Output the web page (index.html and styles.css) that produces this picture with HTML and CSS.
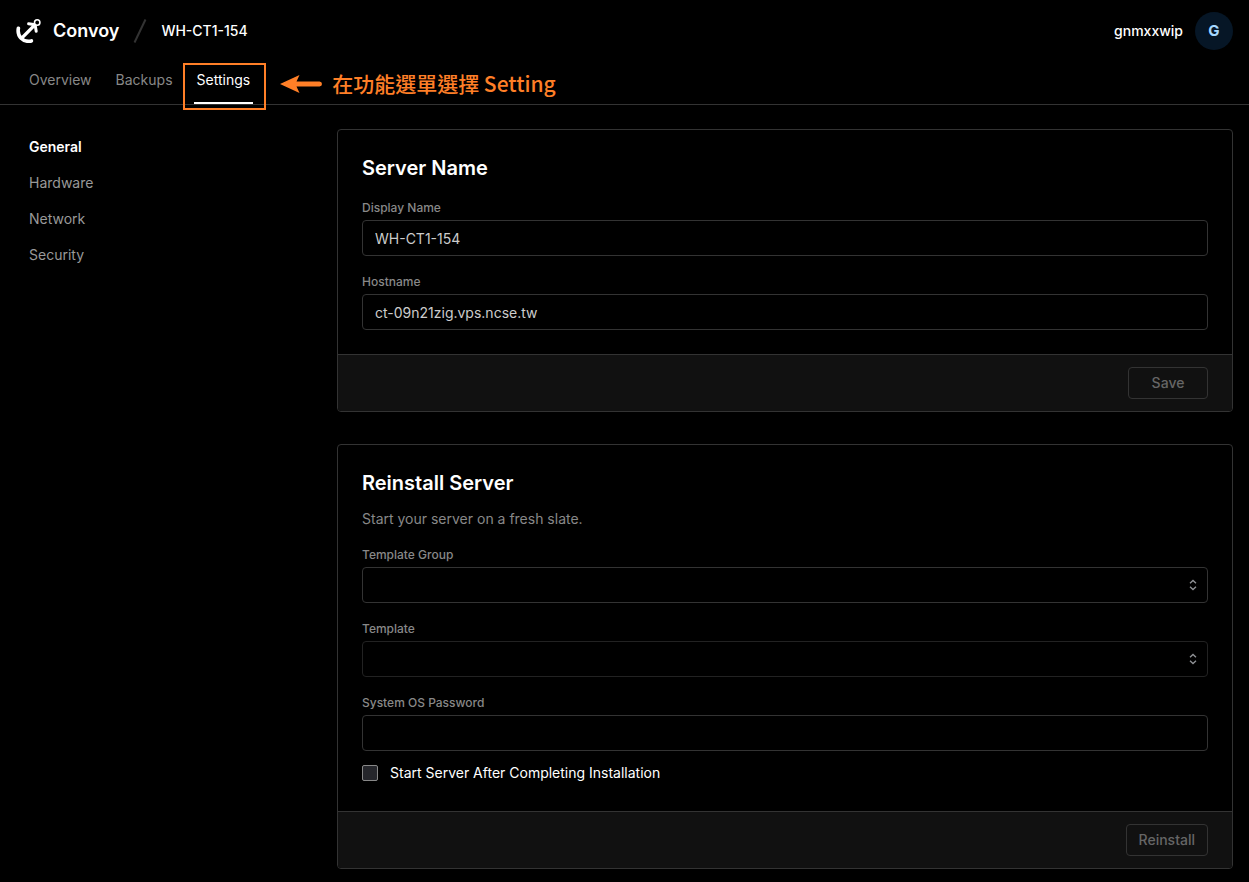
FILE: index.html
```html
<!DOCTYPE html>
<html lang="en">
<head>
<meta charset="utf-8">
<meta name="viewport" content="width=device-width, initial-scale=1">
<title>Convoy</title>
<link rel="stylesheet" href="styles.css">
</head>
<body>
<header class="header">
  <div class="topbar">
    <a class="brand" href="#">
      <svg class="brand-logo" viewBox="0 0 25 24" fill="none" stroke="currentColor" stroke-linecap="round" stroke-linejoin="round" aria-hidden="true">
        <circle cx="21.2" cy="3.5" r="2.7" stroke-width="1.6"/>
        <path d="M18.4 6.4 6.2 18.6" stroke-width="3.4"/>
        <path d="M12.6 4.8 17.6 5.6 19.4 7.4 20.2 12.2" stroke-width="3"/>
        <path d="M2.4 9.2C1.7 13 2.5 16.6 5.1 19.2 7.8 21.9 11.6 22.8 15.4 21.9" stroke-width="3.6"/>
      </svg>
      <span>Convoy</span>
    </a>
    <svg class="slash" viewBox="0 0 14 24" fill="none" stroke="currentColor" stroke-width="2" aria-hidden="true"><path d="M12.5 .5 1.5 23.5"/></svg>
    <a class="crumb" href="#">WH-CT1-154</a>
    <div class="account">
      <span>gnmxxwip</span>
      <button class="avatar" type="button" aria-label="Account">G</button>
    </div>
  </div>
  <nav class="tabs" aria-label="Server">
    <a class="tab" href="#">Overview</a>
    <a class="tab" href="#">Backups</a>
    <a class="tab tab-active" href="#" aria-current="page">Settings
      <span class="callout-box"></span>
      <span class="callout">
        <svg class="callout-arrow" viewBox="0 0 42 18" aria-hidden="true"><path d="M0 9 19.5 0 16.5 6.5H39.5a2.5 2.5 0 0 1 0 5H16.5L19.5 18Z" fill="currentColor"/></svg>
        <span class="callout-text" lang="zh-Hant">在功能選單選擇 Setting</span>
      </span>
    </a>
  </nav>
</header>
<div class="page">
  <nav class="sidebar" aria-label="Settings">
    <a class="side-link side-active" href="#" aria-current="page">General</a>
    <a class="side-link" href="#">Hardware</a>
    <a class="side-link" href="#">Network</a>
    <a class="side-link" href="#">Security</a>
  </nav>
  <main class="cards">
    <form class="card">
      <div class="card-body">
        <h2 class="card-title">Server Name</h2>
        <div class="field">
          <label class="label" for="display-name">Display Name</label>
          <input class="control" id="display-name" type="text" value="WH-CT1-154">
        </div>
        <div class="field">
          <label class="label" for="hostname">Hostname</label>
          <input class="control" id="hostname" type="text" value="ct-09n21zig.vps.ncse.tw">
        </div>
      </div>
      <div class="card-footer"><button class="button button-wide" type="submit" disabled>Save</button></div>
    </form>
    <form class="card">
      <div class="card-body">
        <h2 class="card-title">Reinstall Server</h2>
        <p class="card-text">Start your server on a fresh slate.</p>
        <div class="field">
          <label class="label" for="group">Template Group</label>
          <div class="select">
            <select class="control" id="group"><option></option></select>
            <svg class="chevrons" viewBox="0 0 8 12" fill="none" stroke="currentColor" stroke-width="1.3" aria-hidden="true"><path d="M1 4.2 4 1.4 7 4.2M1 7.8 4 10.6 7 7.8"/></svg>
          </div>
        </div>
        <div class="field">
          <label class="label" for="template">Template</label>
          <div class="select">
            <select class="control" id="template" disabled><option></option></select>
            <svg class="chevrons" viewBox="0 0 8 12" fill="none" stroke="currentColor" stroke-width="1.3" aria-hidden="true"><path d="M1 4.2 4 1.4 7 4.2M1 7.8 4 10.6 7 7.8"/></svg>
          </div>
        </div>
        <div class="field">
          <label class="label" for="password">System OS Password</label>
          <input class="control" id="password" type="password">
        </div>
        <div class="check">
          <input class="checkbox" id="start" type="checkbox">
          <label for="start">Start Server After Completing Installation</label>
        </div>
      </div>
      <div class="card-footer"><button class="button" type="submit" disabled>Reinstall</button></div>
    </form>
  </main>
</div>
</body>
</html>
```

FILE: styles.css
```css
* {
  box-sizing: border-box;
}

body {
  margin: 0;
  background: #000;
  color: #fff;
  font: 14px/20px Inter, "Liberation Sans", sans-serif;
}

a {
  color: inherit;
  text-decoration: none;
}

button,
input,
select {
  font: inherit;
}

.header {
  padding-top: 12px;
  border-bottom: 1px solid #333;
}

.topbar {
  display: flex;
  align-items: center;
  padding: 0 16px;
}

.brand {
  display: flex;
  align-items: center;
  gap: 12px;
  font-size: 18px;
  font-weight: 600;
}

.brand-logo {
  width: 25px;
  height: 24px;
}

.slash {
  width: 14px;
  height: 24px;
  margin: 0 14px;
  color: #333;
}

.crumb {
  font-weight: 500;
}

.account {
  display: flex;
  align-items: center;
  gap: 12px;
  margin-left: auto;
  font-weight: 500;
}

.avatar {
  width: 38px;
  height: 38px;
  padding: 0;
  border: 0;
  border-radius: 50%;
  background: #061626;
  color: #a5d8ff;
  font-size: 15px;
  font-weight: 700;
}

.tabs {
  display: flex;
  margin-top: 10px;
  padding: 0 17px;
}

.tab {
  position: relative;
  padding: 0 12px 4px;
  color: #888;
  line-height: 40px;
}

.tab-active {
  color: #fff;
}

.tab-active::after {
  content: "";
  position: absolute;
  right: 9px;
  bottom: 0;
  left: 9px;
  height: 2px;
  background: #fff;
}

.callout-box {
  position: absolute;
  inset: 3px -4px -6px -2px;
  border: 2px solid #ff7f27;
}

.callout {
  position: absolute;
  top: 4px;
  left: 100%;
  display: flex;
  align-items: center;
  gap: 10px;
  margin-left: 18px;
  color: #ff7f27;
  white-space: nowrap;
}

.callout-text {
  padding-bottom: 2px;
  font: 500 21px/38px "Noto Sans CJK TC", sans-serif;
}

.callout-arrow {
  width: 42px;
  height: 18px;
}

.page {
  display: grid;
  grid-template-columns: 297px 1fr;
  gap: 24px;
  padding: 24px 16px 12px;
}

.sidebar {
  display: flex;
  flex-direction: column;
}

.side-link {
  padding: 8px 13px;
  color: #999;
}

.side-active {
  color: #fff;
  font-weight: 600;
}

.cards {
  display: flex;
  flex-direction: column;
  gap: 32px;
}

.card {
  overflow: hidden;
  border: 1px solid #333;
  border-radius: 4px;
}

.card-body {
  padding: 24px;
}

.card-title {
  margin: 0;
  font-size: 20px;
  font-weight: 600;
  line-height: 28px;
}

.card-text {
  margin: 12px 0 0;
  color: #888;
}

.field {
  display: grid;
  gap: 2px;
  margin-top: 16px;
}

.label {
  color: #888;
  font-size: 12px;
  font-weight: 500;
}

.control {
  display: block;
  width: 100%;
  height: 36px;
  padding: 0 12px;
  border: 1px solid #333;
  border-radius: 4px;
  background: #000;
  color: #ccc;
  appearance: none;
}

.control:disabled {
  border-color: #222;
  opacity: 1;
}

.select {
  position: relative;
}

.chevrons {
  position: absolute;
  top: 12px;
  right: 11px;
  width: 8px;
  height: 12px;
  color: #909296;
  pointer-events: none;
}

.check {
  display: flex;
  align-items: center;
  gap: 12px;
  height: 28px;
  margin-top: 8px;
}

.checkbox {
  width: 16px;
  height: 16px;
  margin: 0;
  border: 1px solid #888;
  border-radius: 2px;
  background: #25262b;
  appearance: none;
}

.checkbox:checked {
  background: #fff;
}

.card-footer {
  display: flex;
  justify-content: flex-end;
  padding: 12px 24px;
  border-top: 1px solid #333;
  background: #111;
}

.button {
  height: 32px;
  padding: 0 12px;
  border: 1px solid #333;
  border-radius: 4px;
  background: transparent;
  color: #666;
  font-weight: 500;
}

.button-wide {
  min-width: 80px;
}
```
